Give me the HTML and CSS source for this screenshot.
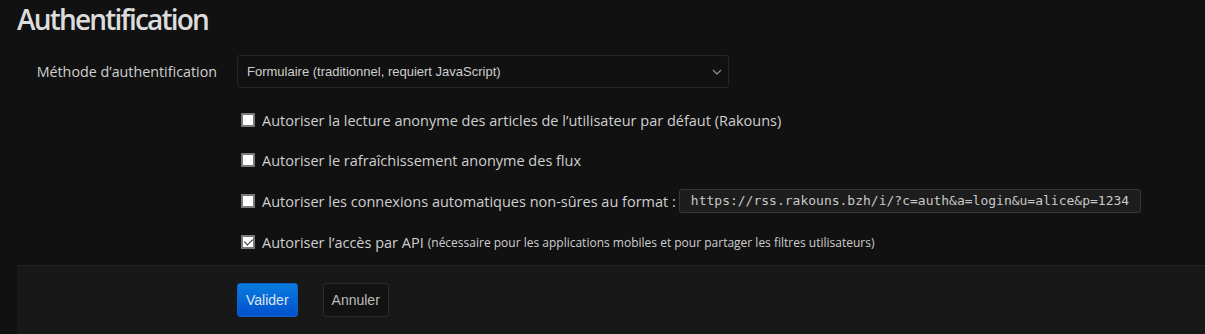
FILE: index.html
```html
<!DOCTYPE html>
<html lang="fr">
<head>
  <meta charset="UTF-8">
  <title>Authentification</title>
  <link rel="stylesheet" href="styles.css">
</head>
<body>
  <div class="page">
    <h1>Authentification</h1>

    <form class="formulaire">
      <div class="groupe">
        <label class="nom-groupe" for="methode">Méthode d’authentification</label>
        <div class="controles">
          <div class="select-box">
            <select id="methode">
              <option>Formulaire (traditionnel, requiert JavaScript)</option>
            </select>
            <svg class="fleche" width="10" height="6" viewBox="0 0 10 6"><path d="M1 1 L5 5 L9 1" fill="none" stroke="#8a8a8a" stroke-width="1.3"/></svg>
          </div>
        </div>
      </div>

      <div class="groupe">
        <div class="controles">
          <label class="case"><input type="checkbox"> Autoriser la lecture anonyme des articles de l’utilisateur par défaut (Rakouns)</label>
        </div>
      </div>

      <div class="groupe">
        <div class="controles">
          <label class="case"><input type="checkbox"> Autoriser le rafraîchissement anonyme des flux</label>
        </div>
      </div>

      <div class="groupe groupe-code">
        <div class="controles">
          <label class="case"><input type="checkbox"> Autoriser les connexions automatiques non-sûres au format&nbsp;: <kbd>https://rss.rakouns.bzh/i/?c=auth&amp;a=login&amp;u=alice&amp;p=1234</kbd></label>
        </div>
      </div>

      <div class="groupe">
        <div class="controles">
          <label class="case"><input type="checkbox" checked> Autoriser l’accès par API <small>(nécessaire pour les applications mobiles et pour partager les filtres utilisateurs)</small></label>
        </div>
      </div>

      <div class="actions">
        <div class="controles">
          <button type="button" class="btn btn-valider">Valider</button>
          <button type="reset" class="btn">Annuler</button>
        </div>
      </div>
    </form>
  </div>
</body>
</html>
```

FILE: styles.css
```css
* {
  box-sizing: border-box;
}

body {
  margin: 0;
  background-color: #111111;
  color: #cfcfcf;
  font-family: 'Open Sans', sans-serif;
  font-size: 14px;
}

.page {
  padding: 0 0 0 17px;
}

h1 {
  margin: 0;
  height: 44px;
  line-height: 38px;
  font-size: 28px;
  font-weight: 600;
  color: #dcdcdc;
  letter-spacing: -1.8px;
}

.groupe {
  display: flex;
  align-items: center;
  min-height: 40px;
}

.groupe:first-of-type {
  min-height: 56px;
  align-items: flex-start;
  padding-top: 11px;
}

.groupe-code {
  min-height: 42px;
}

.nom-groupe {
  width: 200px;
  text-align: right;
  font-size: 14.3px;
  line-height: 33px;
  color: #cfcfcf;
}

.groupe .nom-groupe + .controles {
  margin-left: 20px;
}

.groupe > .controles:only-child {
  margin-left: 220px;
}

.select-box {
  position: relative;
  width: 492px;
}

select {
  appearance: none;
  width: 100%;
  height: 33px;
  padding: 0 9px;
  background-color: #111111;
  border: 1px solid #252525;
  border-radius: 3px;
  color: #cfcfcf;
  font-family: 'Liberation Sans', Arial, sans-serif;
  font-size: 13px;
}

.fleche {
  position: absolute;
  right: 7px;
  top: 14px;
  pointer-events: none;
}

.case {
  display: flex;
  align-items: center;
  font-size: 14.5px;
  color: #cfcfcf;
  white-space: nowrap;
}

.case input {
  appearance: none;
  width: 14px;
  height: 14px;
  margin: 0 7px 0 4px;
  background: #ffffff;
  border: 2px solid #7a7a7a;
  border-radius: 0;
  position: relative;
}

.case input:checked::after {
  content: "";
  position: absolute;
  left: 3px;
  top: 0px;
  width: 4px;
  height: 7px;
  border: solid #222;
  border-width: 0 1.5px 1.5px 0;
  transform: rotate(45deg);
}

.case small {
  font-size: 12px;
  margin-left: 4px;
}

kbd {
  margin-left: 3px;
  padding: 2px 11px;
  background-color: #1d1d1d;
  border: 1px solid #363636;
  border-radius: 3px;
  color: #c8c8c8;
  font-family: 'DejaVu Sans Mono', monospace;
  font-size: 13px;
  line-height: 18px;
}

.actions {
  margin-top: 3px;
  background-color: #181818;
  border-top: 1px solid #222222;
  padding: 17px 0 30px;
}

.actions .controles {
  margin-left: 220px;
  display: flex;
  gap: 25px;
}

.btn {
  height: 34px;
  padding: 0 8px;
  background-color: #121212;
  border: 1px solid #2c2c2c;
  border-radius: 3px;
  color: #bdbdbd;
  font-family: 'Liberation Sans', Arial, sans-serif;
  font-size: 14px;
  cursor: pointer;
}

.btn-valider {
  background: linear-gradient(#0a7ddf, #0050cc);
  border-color: #0a63c9;
  color: #dde6f2;
}
```
